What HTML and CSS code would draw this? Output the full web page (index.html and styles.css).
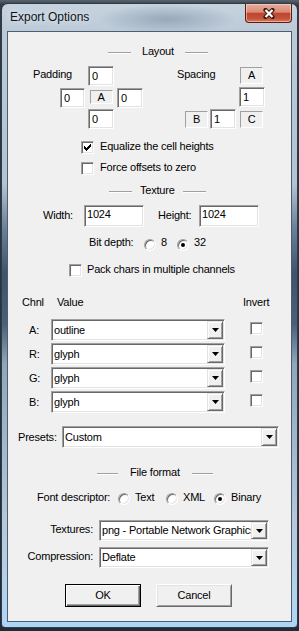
FILE: index.html
```
<!DOCTYPE html>
<html lang="en">

<head>
    <meta charset="UTF-8">
    <meta name="viewport" content="width=device-width, initial-scale=1.0">
    <title>Export Options</title>
    <link rel="stylesheet" href="styles.css">
</head>

<body>
    <div class="window">
        <div class="titlebar">
            <span class="title">Export Options</span>
            <button class="close-btn" aria-label="Close">
                <svg width="12" height="11" viewBox="0 0 12 11">
                    <path d="M2.5 2 L9.5 9 M9.5 2 L2.5 9" stroke="#3b1810" stroke-width="4.2" stroke-linecap="round" />
                    <path d="M2.5 2 L9.5 9 M9.5 2 L2.5 9" stroke="#fff" stroke-width="2.2" />
                </svg>
            </button>
        </div>

        <div class="client">
            <!-- Layout -->
            <div class="sep sep-layout"><span class="line"></span><span>Layout</span><span class="line"></span></div>

            <div class="layout">
                <div class="pad-grid">
                    <span class="grid-label lbl-pad">Padding</span>
                    <span class="edit edit-sm top">0</span>
                    <span class="edit edit-sm left">0</span>
                    <span class="tag tag-pad">A</span>
                    <span class="edit edit-sm right">0</span>
                    <span class="edit edit-sm bottom">0</span>
                </div>
                <div class="spc-grid">
                    <span class="grid-label lbl-spc">Spacing</span>
                    <span class="tag tag-a">A</span>
                    <span class="edit edit-sm spc-h">1</span>
                    <span class="tag tag-b">B</span>
                    <span class="edit edit-sm spc-v">1</span>
                    <span class="tag tag-c">C</span>
                </div>
            </div>

            <div class="check-row row-equal">
                <span class="checkbox">
                    <svg width="7" height="7" viewBox="0 0 7 7" shape-rendering="crispEdges">
                        <path d="M6 0h1v3h-1zM5 1h1v3h-1zM4 2h1v3h-1zM3 3h1v3h-1zM2 4h1v3h-1zM1 3h1v3h-1zM0 2h1v3h-1z" />
                    </svg>
                </span>
                <span>Equalize the cell heights</span>
            </div>
            <div class="check-row row-force">
                <span class="checkbox"></span>
                <span>Force offsets to zero</span>
            </div>

            <!-- Texture -->
            <div class="sep sep-texture"><span class="line"></span><span>Texture</span><span class="line"></span></div>

            <div class="dim-row">
                <span class="dim-label">Width:</span>
                <span class="edit edit-lg">1024</span>
                <span class="dim-label dim-label-h">Height:</span>
                <span class="edit edit-lg">1024</span>
            </div>

            <div class="bit-row">
                <span class="bit-label">Bit depth:</span>
                <span class="opt opt-bit"><span class="radio"></span>8</span>
                <span class="opt"><span class="radio on"></span>32</span>
            </div>

            <div class="check-row row-pack">
                <span class="checkbox"></span>
                <span>Pack chars in multiple channels</span>
            </div>

            <div class="chnl-head">
                <span class="h-chnl">Chnl</span>
                <span class="h-value">Value</span>
                <span>Invert</span>
            </div>

            <div class="channels">
                <div class="chan-row">
                    <span class="chan-label">A:</span>
                    <div class="combo combo-chan"><span class="combo-text">outline</span><span class="drop"><svg width="7" height="4" viewBox="0 0 7 4"><path d="M0 0h7l-3.5 4z" /></svg></span></div>
                    <span class="checkbox chan-check"></span>
                </div>
                <div class="chan-row">
                    <span class="chan-label">R:</span>
                    <div class="combo combo-chan"><span class="combo-text">glyph</span><span class="drop"><svg width="7" height="4" viewBox="0 0 7 4"><path d="M0 0h7l-3.5 4z" /></svg></span></div>
                    <span class="checkbox chan-check"></span>
                </div>
                <div class="chan-row">
                    <span class="chan-label">G:</span>
                    <div class="combo combo-chan"><span class="combo-text">glyph</span><span class="drop"><svg width="7" height="4" viewBox="0 0 7 4"><path d="M0 0h7l-3.5 4z" /></svg></span></div>
                    <span class="checkbox chan-check"></span>
                </div>
                <div class="chan-row">
                    <span class="chan-label">B:</span>
                    <div class="combo combo-chan"><span class="combo-text">glyph</span><span class="drop"><svg width="7" height="4" viewBox="0 0 7 4"><path d="M0 0h7l-3.5 4z" /></svg></span></div>
                    <span class="checkbox chan-check"></span>
                </div>
            </div>

            <div class="preset-row">
                <span class="preset-label">Presets:</span>
                <div class="combo combo-preset"><span class="combo-text">Custom</span><span class="drop"><svg width="7" height="4" viewBox="0 0 7 4"><path d="M0 0h7l-3.5 4z" /></svg></span></div>
            </div>

            <!-- File format -->
            <div class="sep sep-format"><span class="line"></span><span>File format</span><span class="line"></span></div>

            <div class="fmt-row">
                <span class="fmt-label">Font descriptor:</span>
                <span class="opt opt-fmt"><span class="radio"></span>Text</span>
                <span class="opt opt-fmt"><span class="radio"></span>XML</span>
                <span class="opt"><span class="radio on"></span>Binary</span>
            </div>

            <div class="tex-row">
                <span class="tex-label">Textures:</span>
                <div class="combo combo-tex"><span class="combo-text">png - Portable Network Graphics</span><span class="drop"><svg width="7" height="4" viewBox="0 0 7 4"><path d="M0 0h7l-3.5 4z" /></svg></span></div>
            </div>
            <div class="tex-row tex-row-2">
                <span class="tex-label">Compression:</span>
                <div class="combo combo-tex"><span class="combo-text">Deflate</span><span class="drop"><svg width="7" height="4" viewBox="0 0 7 4"><path d="M0 0h7l-3.5 4z" /></svg></span></div>
            </div>

            <div class="btn-row">
                <button class="btn btn-default">OK</button>
                <button class="btn">Cancel</button>
            </div>
        </div>
    </div>
</body>

</html>
```

FILE: styles.css
```
* {
    margin: 0;
    padding: 0;
    box-sizing: border-box;
}

body {
    height: 631px;
    overflow: hidden;
    background: linear-gradient(#5a646e 0, #313b46 5px, #222b35 100%);
    font-family: 'Liberation Sans', Arial, sans-serif;
    font-size: 11px;
    line-height: 13px;
    letter-spacing: -0.2px;
    color: #000;
}

/* window frame */

.window {
    width: 297px;
    height: 625px;
    margin: 3px 0 0 1px;
    border: 1px solid #2e3b48;
    border-radius: 7px 7px 4px 4px;
    display: flex;
    flex-direction: column;
    background:
        radial-gradient(ellipse 70px 15px at 165px 15px, rgba(78, 98, 120, 0.35), rgba(78, 98, 120, 0)),
        linear-gradient(to bottom, #c6d3df 0, #bccad8 28px, #b3c3d1 180px, #6a8097 225px, #3f546b 270px, #4b6077 320px, #8fa6bb 360px, #b5c9da 520px, #b2d4ef 600px, #acd6f6 100%);
}

.titlebar {
    height: 27px;
    flex-shrink: 0;
    display: flex;
    align-items: flex-start;
}

.title {
    font-size: 12px;
    line-height: 15px;
    letter-spacing: 0;
    padding: 6px 0 0 8px;
    color: #101418;
    text-shadow: 0 0 6px rgba(255, 255, 255, 0.8);
}

.close-btn {
    margin-left: auto;
    margin-right: 5px;
    width: 47px;
    height: 19px;
    display: flex;
    align-items: center;
    justify-content: center;
    border: 1px solid #5a1d12;
    border-top: none;
    border-radius: 0 0 4px 4px;
    background: linear-gradient(#e8ab9c 0, #da8a77 45%, #c0452c 52%, #c4523a 80%, #dc7a5d 100%);
    box-shadow: inset 0 0 0 1px rgba(255, 230, 220, 0.5);
}

.client {
    margin: 0 5px;
    height: 591px;
    border: 1px solid #4f5e6e;
    background: #f0f0f0;
}

/* etched section headings */

.sep {
    display: flex;
    height: 13px;
}

.sep .line {
    height: 2px;
    margin-top: 7px;
    border-top: 1px solid #a0a0a0;
    border-bottom: 1px solid #fff;
}

.sep-layout {
    margin-top: 13px;
    padding-left: 100px;
    gap: 11px;
}

.sep-layout .line {
    width: 23px;
}

.sep-texture {
    margin-top: 9px;
    padding-left: 101px;
    gap: 8px;
}

.sep-texture .line {
    width: 23px;
}

.sep-format {
    margin-top: 18px;
    padding-left: 89px;
    gap: 12px;
}

.sep-format .line {
    width: 21px;
}

/* 3d controls */

.edit {
    display: block;
    background: #fff;
    border: 1px solid;
    border-color: #a0a0a0 #fff #fff #a0a0a0;
    box-shadow: inset 1px 1px #696969, inset -1px -1px #e3e3e3;
    white-space: nowrap;
}

.edit-sm {
    width: 26px;
    height: 20px;
    padding: 3px 0 0 3px;
    align-self: start;
}

.edit-lg {
    width: 60px;
    height: 22px;
    padding: 2px 0 0 2px;
}

.tag {
    display: block;
    width: 23px;
    height: 17px;
    border: 1px solid;
    border-color: #a0a0a0 #fff #fff #a0a0a0;
    text-align: center;
    line-height: 15px;
    align-self: start;
}

.checkbox {
    width: 13px;
    height: 13px;
    flex-shrink: 0;
    display: flex;
    align-items: center;
    justify-content: center;
    background: #fff;
    border: 1px solid;
    border-color: #a0a0a0 #fff #fff #a0a0a0;
    box-shadow: inset 1px 1px #696969, inset -1px -1px #e3e3e3;
}

.radio {
    width: 12px;
    height: 12px;
    flex-shrink: 0;
    display: flex;
    align-items: center;
    justify-content: center;
    border-radius: 50%;
    background: #fff;
    border: 1px solid;
    border-color: #a0a0a0 #fff #fff #a0a0a0;
    box-shadow: inset 1px 1px #696969, inset -1px -1px #e3e3e3;
}

.radio.on::after {
    content: "";
    width: 4px;
    height: 4px;
    border-radius: 50%;
    background: #000;
}

.combo {
    display: flex;
    height: 22px;
    padding: 1px;
    background: #fff;
    border: 1px solid;
    border-color: #a0a0a0 #fff #fff #a0a0a0;
    box-shadow: inset 1px 1px #696969, inset -1px -1px #e3e3e3;
}

.combo-text {
    flex: 1;
    align-self: center;
    padding-left: 1px;
    overflow: hidden;
    white-space: nowrap;
}

.drop {
    width: 16px;
    flex-shrink: 0;
    display: flex;
    align-items: center;
    justify-content: center;
    background: #f0f0f0;
    border: 1px solid;
    border-color: #e3e3e3 #696969 #696969 #e3e3e3;
    box-shadow: inset 1px 1px #fff, inset -1px -1px #a0a0a0;
}

/* layout block */

.layout {
    display: flex;
    margin-top: 8px;
    padding-left: 25px;
    height: 63px;
}

.grid-label {
    padding-top: 2px;
}

.pad-grid {
    display: grid;
    grid-template-columns: 27px 28px 26px 28px;
    grid-template-rows: 22px 21px 20px;
}

.lbl-pad {
    grid-area: 1 / 1 / 2 / 3;
}

.pad-grid .top {
    grid-area: 1 / 3;
}

.pad-grid .left {
    grid-area: 2 / 2;
    width: 25px;
}

.tag-pad {
    grid-area: 2 / 3;
    justify-self: center;
    height: 14px;
    line-height: 12px;
    margin-top: 2px;
}

.pad-grid .right {
    grid-area: 2 / 4;
    margin-left: 3px;
}

.pad-grid .bottom {
    grid-area: 3 / 3;
}

.spc-grid {
    display: grid;
    margin-left: 35px;
    grid-template-columns: 8px 25px 29px 26px;
    grid-template-rows: 21px 22px 20px;
}

.lbl-spc {
    grid-area: 1 / 1 / 2 / 4;
}

.tag-a {
    grid-area: 1 / 4;
    margin: 1px 0 0 1px;
}

.spc-h {
    grid-area: 2 / 4;
}

.tag-b {
    grid-area: 3 / 2;
    margin-top: 2px;
}

.spc-v {
    grid-area: 3 / 3;
}

.tag-c {
    grid-area: 3 / 4;
    margin: 2px 0 0 1px;
}

/* checkbox rows */

.check-row {
    display: flex;
    gap: 6px;
    height: 14px;
    padding-left: 73px;
}

.check-row .checkbox {
    margin-top: 1px;
}

.row-equal {
    margin-top: 11px;
}

.row-force {
    margin-top: 7px;
}

.row-pack {
    margin-top: 12px;
    padding-left: 61px;
    gap: 5px;
}

/* texture */

.dim-row {
    display: flex;
    margin-top: 8px;
    padding-left: 35px;
    height: 22px;
}

.dim-label {
    width: 41px;
    padding-top: 4px;
}

.dim-label-h {
    margin-left: 14px;
}

.bit-row {
    display: flex;
    margin-top: 9px;
    padding-left: 81px;
    height: 15px;
}

.bit-label {
    width: 55px;
}

.opt {
    display: flex;
    gap: 5px;
}

.bit-row .radio {
    margin-top: 3px;
}

.opt-bit {
    width: 33px;
}

/* channels */

.chnl-head {
    display: flex;
    margin-top: 19px;
    padding-left: 14px;
    height: 13px;
}

.h-chnl {
    width: 35px;
}

.h-value {
    width: 186px;
}

.channels {
    display: flex;
    flex-direction: column;
    gap: 2px;
    margin-top: 10px;
}

.chan-row {
    display: flex;
    height: 22px;
    padding-left: 21px;
}

.chan-label {
    width: 22px;
    padding-top: 5px;
}

.combo-chan {
    width: 174px;
}

.chan-check {
    margin: 3px 0 0 25px;
}

.preset-row {
    display: flex;
    margin-top: 13px;
    padding-left: 10px;
}

.preset-label {
    width: 44px;
    padding-top: 5px;
}

.combo-preset {
    width: 217px;
}

/* file format */

.fmt-row {
    display: flex;
    margin-top: 12px;
    padding-left: 29px;
    height: 14px;
}

.fmt-label {
    width: 81px;
}

.fmt-row .radio {
    margin-top: 2px;
}

.opt-fmt {
    width: 48px;
}

.tex-row {
    display: flex;
    margin-top: 15px;
    height: 21px;
}

.tex-row-2 {
    margin-top: 6px;
}

.tex-label {
    width: 85px;
    text-align: right;
    padding-top: 3px;
}

.combo-tex {
    width: 170px;
    height: 21px;
    margin-left: 6px;
}

/* buttons */

.btn-row {
    display: flex;
    gap: 15px;
    margin-top: 16px;
    padding-left: 57px;
}

.btn {
    width: 76px;
    height: 23px;
    font: inherit;
    letter-spacing: inherit;
    color: #000;
    background: #f0f0f0;
    border: 1px solid;
    border-color: #fff #696969 #696969 #fff;
    box-shadow: inset 1px 1px #e3e3e3, inset -1px -1px #a0a0a0;
}

.btn-default {
    border-color: #000;
    box-shadow: inset 1px 1px #fff, inset -1px -1px #696969, inset -2px -2px #a0a0a0;
}
```
